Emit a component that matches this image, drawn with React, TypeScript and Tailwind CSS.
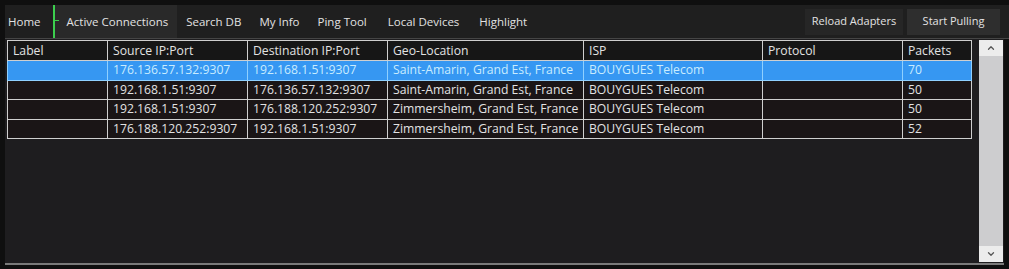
import { ChevronUp, ChevronDown } from "lucide-react";

const tabs = ["Home", "Active Connections", "Search DB", "My Info", "Ping Tool", "Local Devices", "Highlight"];

const columns = [
  { name: "Label", w: "w-[100px]" },
  { name: "Source IP:Port", w: "w-[140px]" },
  { name: "Destination IP:Port", w: "w-[140px]" },
  { name: "Geo-Location", w: "w-[196px]" },
  { name: "ISP", w: "w-[179px]" },
  { name: "Protocol", w: "w-[140px]" },
  { name: "Packets", w: "w-[69px]" },
];

const rows = [
  ["", "176.136.57.132:9307", "192.168.1.51:9307", "Saint-Amarin, Grand Est, France", "BOUYGUES Telecom", "", "70"],
  ["", "192.168.1.51:9307", "176.136.57.132:9307", "Saint-Amarin, Grand Est, France", "BOUYGUES Telecom", "", "50"],
  ["", "192.168.1.51:9307", "176.188.120.252:9307", "Zimmersheim, Grand Est, France", "BOUYGUES Telecom", "", "50"],
  ["", "176.188.120.252:9307", "192.168.1.51:9307", "Zimmersheim, Grand Est, France", "BOUYGUES Telecom", "", "52"],
];

export default function App() {
  // selected row index
  const selected = 0;

  return (
    <div className="w-[1009px] h-[269px] bg-[#0f0f0f] pt-[5px] pl-[5px] pb-[4px] flex flex-col font-['Open_Sans',sans-serif] text-[12.2px] text-[#e2e2e2] overflow-hidden">
      {/* tab bar */}
      <div className="h-[34px] flex items-center bg-[#1f1f1f] border-b border-[#454545] pr-[5px] text-[11.5px]">
        {tabs.map((t) =>
          t === "Active Connections" ? (
            <div key={t} className="h-full flex items-center bg-[#292929] border-l-2 border-[#3ccf4e] pl-[12px] pr-[9px] relative">
              <span className="absolute left-0 top-[15px] w-[4px] h-px bg-[#3ccf4e]" />
              {t}
            </div>
          ) : (
            <div
              key={t}
              className={`h-full flex items-center ${
                t === "Home" ? "pl-[3px] pr-[12px]" : t === "Local Devices" ? "pl-[12px] pr-[11px]" : "px-[9px]"
              }`}
            >
              {t}
            </div>
          )
        )}
        <div className="flex-1" />
        <div className="w-[98px] h-[26px] flex items-center justify-center bg-[#262626] mr-[4px] text-[11px]">Reload Adapters</div>
        <div className="w-[93px] h-[26px] flex items-center justify-center bg-[#2e2e2e] mr-[4px] text-[11px]">Start Pulling</div>
      </div>

      {/* content */}
      <div className="flex-1 flex bg-[#1e1d1f] border-b-2 border-[#7a7a7a] mr-[5px]">
        <div className="flex-1 pl-[2px] pt-[1px]">
          <table className="w-[965px] border-collapse table-fixed border border-[#cfcfcf]">
            <thead>
              <tr className="h-[20px] bg-[#161616]">
                {columns.map((c) => (
                  <th key={c.name} className={`${c.w} border border-[#cfcfcf] text-left font-normal px-[5px] py-0 leading-[18px]`}>
                    {c.name}
                  </th>
                ))}
              </tr>
            </thead>
            <tbody>
              {rows.map((r, i) => (
                <tr key={i} className={`h-[19.5px] ${i === selected ? "bg-[#3697f2] text-[#c8ecff]" : "bg-[#1a1516]"}`}>
                  {r.map((cell, j) => (
                    <td key={j} className={`border ${i === selected ? "border-[#8fd0ff]" : "border-[#cfcfcf]"} px-[5px] py-0 leading-[18px] whitespace-nowrap overflow-hidden`}>
                      {cell}
                    </td>
                  ))}
                </tr>
              ))}
            </tbody>
          </table>
        </div>
        {/* scrollbar */}
        <div className="w-[24px] mt-[1px] mb-[1px] mr-[1px] flex flex-col bg-[#cdcdcf]">
          <div className="h-[16px] bg-[#ececec] flex items-center justify-center text-[#555]">
            <ChevronUp size={10} strokeWidth={3} />
          </div>
          <div className="flex-1" />
          <div className="h-[16px] bg-[#ececec] flex items-center justify-center text-[#555]">
            <ChevronDown size={10} strokeWidth={3} />
          </div>
        </div>
      </div>
    </div>
  );
}
